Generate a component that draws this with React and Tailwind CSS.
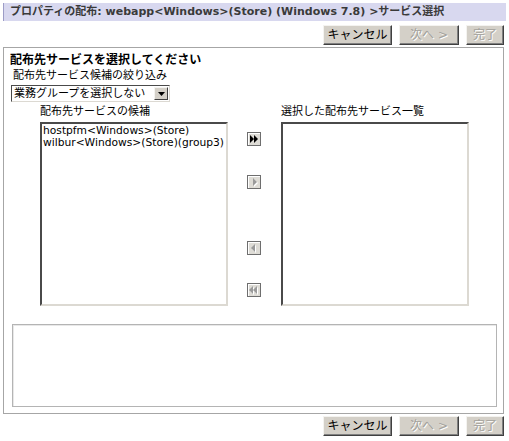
import React from 'react';

const jp = { fontFamily: '"DejaVu Sans", "Noto Sans CJK JP", sans-serif' };

function PushButton({ label, width, disabled }) {
    return (
        <div
            className={`h-[20px] flex items-center justify-center bg-[#d4d0c8] border border-t-[#f4f3f0] border-l-[#f4f3f0] border-r-[#404040] border-b-[#404040] shadow-[inset_-1px_-1px_0_#808080] text-[12px] ${
                disabled ? 'text-[#a3a19b] [text-shadow:1px_1px_0_#ffffff]' : 'text-black'
            }`}
            style={{ width }}
        >
            {label}
        </div>
    );
}

function ButtonRow() {
    return (
        <div className="flex justify-end gap-[7px] pr-[5px]">
            <PushButton label="キャンセル" width={69} />
            <PushButton label="次へ >" width={60} disabled />
            <PushButton label="完了" width={38} disabled />
        </div>
    );
}

function ArrowButton({ kind, enabled }) {
    const fill = enabled ? '#000000' : '#9a9a9a';
    const hi = '#ffffff';
    let shapes;
    if (kind === 'allRight') {
        shapes = (
            <>
                <polygon points="2,2 6,6 2,10" fill={fill} />
                <polygon points="6,2 10,6 6,10" fill={fill} />
            </>
        );
    } else if (kind === 'right') {
        shapes = (
            <>
                <polygon points="6,3 10,7 6,11" fill={hi} />
                <polygon points="5,2 9,6 5,10" fill={fill} />
            </>
        );
    } else if (kind === 'left') {
        shapes = (
            <>
                <polygon points="8,3 4,7 8,11" fill={hi} />
                <polygon points="7,2 3,6 7,10" fill={fill} />
            </>
        );
    } else {
        shapes = (
            <>
                <polygon points="6,3 2,7 6,11" fill={hi} />
                <polygon points="10,3 6,7 10,11" fill={hi} />
                <polygon points="5,2 1,6 5,10" fill={fill} />
                <polygon points="9,2 5,6 9,10" fill={fill} />
            </>
        );
    }
    return (
        <div className="w-[14px] h-[14px] border border-[#6e6e6e] bg-[#dedcd6] shadow-[inset_1px_1px_0_#ffffff]">
            <svg width="12" height="12" viewBox="0 0 12 12" className="block">
                {shapes}
            </svg>
        </div>
    );
}

function ListBox({ items }) {
    return (
        <div className="w-[188px] h-[184px] bg-white border-2 border-t-[#4a4a4a] border-l-[#4a4a4a] border-r-[#dcd9d2] border-b-[#dcd9d2] px-[1px] pt-[1px] text-[10.7px] leading-[12px] text-black overflow-hidden whitespace-nowrap">
            {items.map((it) => (
                <div key={it}>{it}</div>
            ))}
        </div>
    );
}

export default function App() {
    return (
        <div className="w-[509px] h-[441px] bg-white text-black overflow-hidden" style={jp}>
            <div className="mx-[3px] mt-[3px] h-[18px] bg-[#d8d8ef] border-l border-[#9c9cc6] flex items-center pl-[6px] text-[11px] font-bold text-[#3a3a3a] whitespace-nowrap">
                プロパティの配布: webapp&lt;Windows&gt;(Store) (Windows 7.8) &gt;サービス選択
            </div>

            <div className="mt-[4px]">
                <ButtonRow />
            </div>

            <div className="ml-[3px] mt-[2px] w-[501px] h-[367px] border border-[#a6a6a6] flex flex-col">
                <div className="mt-[5px] pl-[6px] text-[12px] leading-[14px] font-bold">
                    配布先サービスを選択してください
                </div>
                <div className="mt-[2px] pl-[9px] text-[11px] leading-[14px]">
                    配布先サービス候補の絞り込み
                </div>
                <div className="mt-[2px] ml-[7px] w-[159px] h-[17px] flex items-center border border-t-[#4a4a4a] border-l-[#4a4a4a] border-r-[#dcd9d2] border-b-[#dcd9d2] bg-white">
                    <div className="flex-1 pl-[2px] text-[11px] leading-[13px]">業務グループを選択しない</div>
                    <div className="w-[14px] h-[13px] mr-[1px] bg-[#d4d0c8] border border-t-[#f4f3f0] border-l-[#f4f3f0] border-r-[#404040] border-b-[#404040] flex items-center justify-center">
                        <svg width="7" height="4" viewBox="0 0 7 4">
                            <polygon points="0,0 7,0 3.5,4" fill="#000" />
                        </svg>
                    </div>
                </div>

                <div className="mt-[3px] flex">
                    <div className="ml-[36px] flex flex-col">
                        <div className="text-[11px] leading-[14px] h-[17px]">配布先サービスの候補</div>
                        <ListBox items={['hostpfm<Windows>(Store)', 'wilbur<Windows>(Store)(group3)']} />
                    </div>
                    <div className="ml-[19px] mt-[17px] flex flex-col">
                        <div className="mt-[10px]">
                            <ArrowButton kind="allRight" enabled />
                        </div>
                        <div className="mt-[29px]">
                            <ArrowButton kind="right" />
                        </div>
                        <div className="mt-[52px]">
                            <ArrowButton kind="left" />
                        </div>
                        <div className="mt-[28px]">
                            <ArrowButton kind="allLeft" />
                        </div>
                    </div>
                    <div className="ml-[20px] flex flex-col">
                        <div className="text-[11px] leading-[14px] h-[17px]">選択した配布先サービス一覧</div>
                        <ListBox items={[]} />
                    </div>
                </div>

                <div className="mt-[18px] ml-[8px] w-[485px] h-[83px] border border-[#b4b4b4] shadow-[inset_1px_1px_0_#e8e8e8]" />
            </div>

            <div className="mt-[2px]">
                <ButtonRow />
            </div>
        </div>
    );
}
